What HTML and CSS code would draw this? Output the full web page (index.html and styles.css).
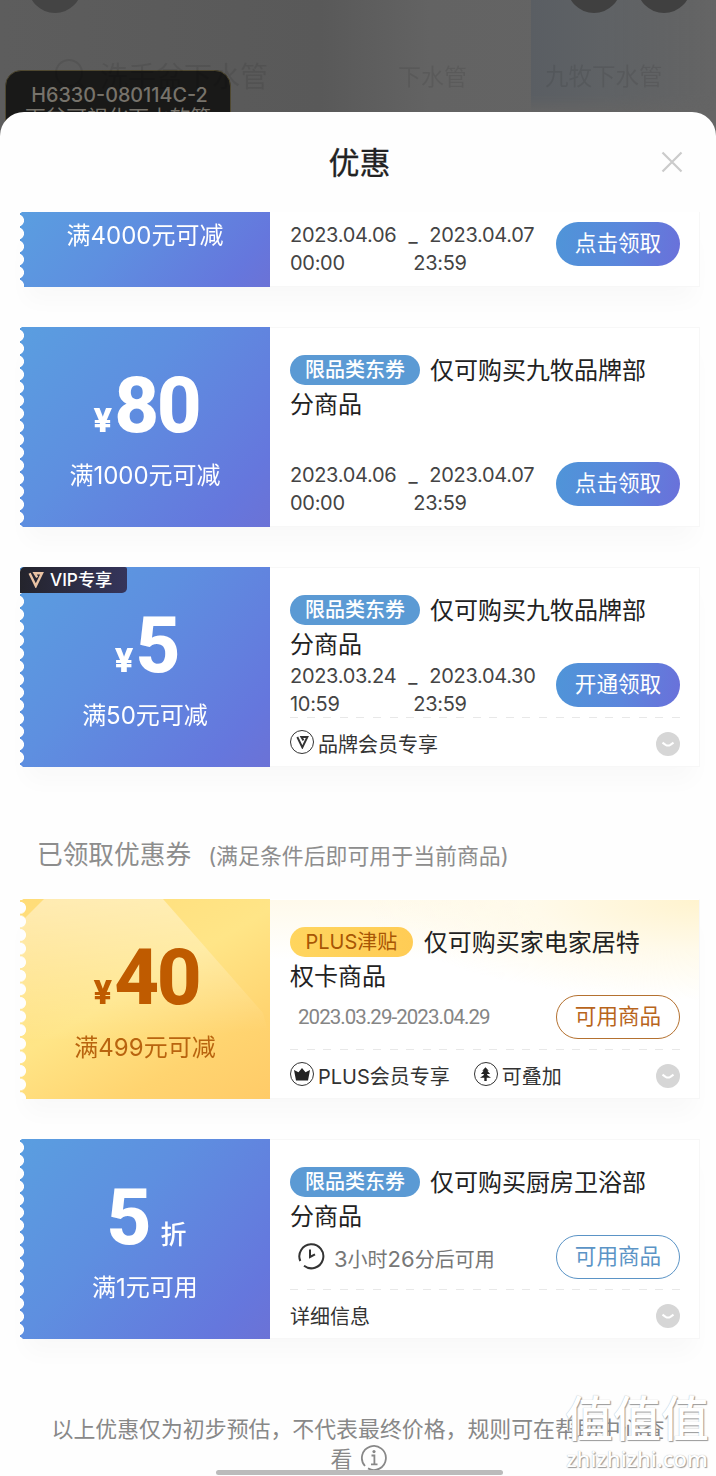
FILE: index.html
```html
<!DOCTYPE html>
<html lang="zh-CN">
<head>
<meta charset="utf-8">
<title>优惠</title>
<link rel="stylesheet" href="styles.css">
</head>
<body>
<svg class="defs" width="0" height="0">
  <symbol id="more" viewBox="0 0 24 24"><circle cx="12" cy="12" r="12" fill="#d6d6d6"/><path d="M6.5 10.6L9.6 12.9Q12 14.3 14.4 12.9L17.5 10.6" fill="none" stroke="#fff" stroke-width="2"/></symbol>
  <symbol id="vee" viewBox="0 0 16 16"><path d="M1.6 1.2L7.8 14 14 1.2H6.6L9.2 5.4" fill="none" stroke="currentColor" stroke-width="2.4"/></symbol>
</svg>
<div class="screen">
  <div class="backdrop">
    <i class="orb orb-a"></i><i class="orb orb-b"></i><i class="orb orb-c"></i>
    <i class="tile"></i>
    <div class="badge"><div class="model">H6330-080114C-2</div><div class="desc">下盆可视化下水软管</div></div>
    <svg class="lens" width="32" height="32" viewBox="0 0 32 32"><circle cx="14" cy="14" r="13" fill="none" stroke="#000" stroke-width="2"/><path d="M23 23L30 30" stroke="#000" stroke-width="2"/></svg>
    <span class="ghost ghost-a">洗手盆下水管</span>
    <span class="ghost ghost-b">下水管</span>
    <span class="ghost ghost-c">九牧下水管</span>
  </div>
  <main class="sheet">
    <header class="head">
      <h1>优惠</h1>
      <svg class="close" width="22" height="22" viewBox="0 0 22 22"><path d="M1.5 1.5L20.5 20.5M20.5 1.5L1.5 20.5" stroke="#cbcbcb" stroke-width="2.2"/></svg>
    </header>
    <section class="list">
      <article class="coupon cut">
        <div class="value"><p class="cond">满4000元可减</p></div>
        <div class="info">
          <div class="row">
            <div class="dates"><span>2023.04.06<br>00:00</span><b>_</b><span>2023.04.07<br><em>23:59</em></span></div>
            <button class="btn">点击领取</button>
          </div>
        </div>
      </article>
      <article class="coupon">
        <div class="value"><p class="amount"><small>¥</small><strong>80</strong></p><p class="cond">满1000元可减</p></div>
        <div class="info">
          <h2><span class="tag">限品类东券</span>仅可购买九牧品牌部<br>分商品</h2>
          <div class="row low">
            <div class="dates"><span>2023.04.06<br>00:00</span><b>_</b><span>2023.04.07<br><em>23:59</em></span></div>
            <button class="btn">点击领取</button>
          </div>
        </div>
      </article>
      <article class="coupon">
        <div class="vip"><svg width="16" height="16"><use href="#vee"/></svg>VIP专享</div>
        <div class="value"><p class="amount"><small>¥</small><strong>5</strong></p><p class="cond">满50元可减</p></div>
        <div class="info">
          <h2><span class="tag">限品类东券</span>仅可购买九牧品牌部<br>分商品</h2>
          <div class="row">
            <div class="dates"><span>2023.03.24<br>10:59</span><b>_</b><span>2023.04.30<br><em>23:59</em></span></div>
            <button class="btn">开通领取</button>
          </div>
          <div class="foot"><span class="ring"><svg width="13" height="13" viewBox="0 0 16 16"><use href="#vee"/></svg></span><span>品牌会员专享</span><svg class="more" width="24" height="24"><use href="#more"/></svg></div>
        </div>
      </article>
      <h3>已领取优惠券<small>(满足条件后即可用于当前商品)</small></h3>
      <article class="coupon plus">
        <div class="value">
          <svg class="shine" width="250" height="200" viewBox="0 0 250 200">
            <defs><linearGradient id="sh" x1="0.35" y1="0" x2="0.45" y2="1"><stop offset="0" stop-color="#fff" stop-opacity=".42"/><stop offset="1" stop-color="#fff" stop-opacity="0"/></linearGradient></defs>
            <path d="M0 24L24 0H143L243 114L250 140H0Z" fill="url(#sh)"/>
          </svg>
          <p class="amount"><small>¥</small><strong>40</strong></p><p class="cond">满499元可减</p>
        </div>
        <div class="info">
          <h2><span class="tag">PLUS津贴</span>仅可购买家电家居特<br>权卡商品</h2>
          <div class="row">
            <div class="period">2023.03.29-2023.04.29</div>
            <button class="btn line">可用商品</button>
          </div>
          <div class="foot">
            <span class="ring"><svg width="16" height="13" viewBox="0 0 16 13"><path d="M0 2L4.5 4.3 8 0 11.5 4.3 16 2 14 12.5H2Z" fill="#222"/></svg></span><span>PLUS会员专享</span>
            <span class="ring second"><svg width="11" height="14" viewBox="0 0 12 15"><path d="M6 0L9.5 4H8L11 7.6H7.8V8.6L12 11.6H7.3V15H4.7V11.6H0L4.2 8.6V7.6H1L4 4H2.5Z" fill="#222"/></svg></span><span>可叠加</span>
            <svg class="more" width="24" height="24"><use href="#more"/></svg>
          </div>
        </div>
      </article>
      <article class="coupon">
        <div class="value"><p class="amount rate"><strong>5</strong><small>折</small></p><p class="cond">满1元可用</p></div>
        <div class="info">
          <h2><span class="tag">限品类东券</span>仅可购买厨房卫浴部<br>分商品</h2>
          <div class="row">
            <div class="wait"><svg width="28" height="28" viewBox="0 0 28 28"><path d="M3.3 19A12 12 0 1 1 7 23.8M13 7.5V15L18 12.3" fill="none" stroke="#333" stroke-width="2"/></svg><span><big>3</big>小时<big>26</big>分后可用</span></div>
            <button class="btn line">可用商品</button>
          </div>
          <div class="foot"><span>详细信息</span><svg class="more" width="24" height="24"><use href="#more"/></svg></div>
        </div>
      </article>
    </section>
    <footer class="note">
      <p>以上优惠仅为初步预估，不代表最终价格，规则可在帮助中心查</p>
      <p class="last">看<svg width="28" height="28" viewBox="0 0 28 28"><path d="M5 22A12 12 0 1 1 8 24.4M11.5 11.5H14.4V20M11 20.3H17.5" fill="none" stroke="#888" stroke-width="1.8"/><circle cx="14" cy="7.6" r="1.6" fill="#888"/></svg></p>
    </footer>
  </main>
  <i class="homebar"></i>
  <div class="mark"><div class="mark-cn">值值值</div><div class="mark-en">zhizhizhi.com</div></div>
</div>
</body>
</html>
```
FILE: styles.css
```css
* { box-sizing: border-box; margin: 0; padding: 0; }
i, em, b { font-style: normal; font-weight: 400; }
body { font-family: Inter, "Noto Sans CJK SC", sans-serif; color: #222; }
.defs { position: absolute; }
.screen { position: relative; width: 716px; height: 1476px; overflow: hidden; background: linear-gradient(90deg, #5d5d5d 0, #595959 320px, #636363 430px, #656565); }

.backdrop > * { position: absolute; }
.orb { width: 54px; height: 54px; border-radius: 50%; background: #444; top: -41px; }
.orb-a { left: 28px; }
.orb-b { left: 567px; background: #404040; }
.orb-c { left: 637px; background: #404040; }
.orb { z-index: 1; }
.tile { left: 531px; top: 0; width: 185px; height: 112px; background: linear-gradient(90deg, #5a5e63, #5f6265 40%, rgba(101,101,101,0)); -webkit-mask: linear-gradient(#000 85%, transparent); mask: linear-gradient(#000 85%, transparent); }
.badge { left: 5px; top: 70px; width: 226px; height: 80px; border: 1px solid #4f4830; border-radius: 16px; background: #191918; text-align: center; color: #77736b; padding-top: 11px; }
.model { font-size: 19.8px; line-height: 26px; font-weight: 500; padding-left: 3px; }
.desc { font-size: 20.7px; line-height: 24px; margin-top: -2px; }
.lens { left: 55px; top: 59px; opacity: .08; }
.ghost { color: #000; opacity: .08; line-height: 34px; white-space: nowrap; top: 60px; }
.ghost-a { left: 100px; font-size: 28px; }
.ghost-b { left: 398px; font-size: 23px; }
.ghost-c { left: 545px; font-size: 23.5px; }

.sheet { position: absolute; top: 112px; left: 0; right: 0; bottom: 0; background: #fefefe; border-radius: 24px 24px 0 0; display: flex; flex-direction: column; }
.head { flex: none; height: 100px; display: grid; grid-template-columns: 1fr auto 1fr; align-items: center; padding: 0 33px 0 35px; }
.head h1 { grid-column: 2; font-size: 31px; font-weight: 400; line-height: 40px; padding: 2px 0 0 1px; color: #222; -webkit-text-stroke: .3px #222; }
.close { justify-self: end; }
.list { padding: 0 16px 0 20px; }

.coupon { position: relative; display: flex; width: 680px; height: 200px; margin-bottom: 40px; box-shadow: 0 20px 22px -6px rgba(0,0,0,.025); }
.coupon.cut { height: 75px; }
.value { position: relative; width: 250px; color: #fff; text-align: center; background: linear-gradient(130deg, #5a9ee0 0, #5e8fe0 40%, #6577dd 85%, #6b72d6);
  -webkit-mask: radial-gradient(circle at -2px 6.5px, transparent 5.6px, #000 6.4px) 0 2px / 250px 13px repeat-y; mask: radial-gradient(circle at -2px 6.5px, transparent 5.6px, #000 6.4px) 0 2px / 250px 13px repeat-y; }
.amount { height: 76px; margin-top: 41px; display: flex; justify-content: center; align-items: baseline; font-family: Roboto, sans-serif; line-height: 76px; }
.amount strong { font-size: 78px; font-weight: 800; letter-spacing: -2.5px; margin-right: -2.5px; }
.amount small { font-family: Inter, sans-serif; font-size: 33px; font-weight: 800; margin-right: 2px; }
.amount.rate { padding-left: 3px; }
.rate small { font-family: "Noto Sans CJK SC", sans-serif; font-size: 26px; font-weight: 500; margin: 0 0 0 14px; }
.cond { font-size: 24px; line-height: 32px; margin-top: 16px; }
.cut .cond { margin-top: 8px; }
.info { flex: 1; background: #fff; border: 1px solid #f7f7f7; border-left: 0; padding: 26px 19px 0 20px; }
.cut .info { padding-top: 8px; border-top: 0; }
h2 { height: 67px; font-size: 24px; font-weight: 400; line-height: 34px; white-space: nowrap; }
.tag { position: relative; top: -2px; display: inline-block; height: 30px; line-height: 30px; border-radius: 15px; padding: 0 15px; margin-right: 10px; font-size: 20px; font-weight: 500; color: #fff; background: #5b9ad4; }
.row { height: 48px; display: flex; justify-content: space-between; align-items: center; }
.row.low { margin-top: 39px; }
.dates { display: flex; padding-top: 9px; font-size: 20px; letter-spacing: -.3px; line-height: 28px; color: #444; }
.dates b { width: 33px; text-align: center; }
.dates em { margin-left: -16px; }
.btn { width: 124px; height: 44px; border: 0; border-radius: 22px; color: #fff; font: 400 21.6px/40px "Noto Sans CJK SC", sans-serif; padding-bottom: 4px; background: linear-gradient(100deg, #4f95d8, #5b86dc 55%, #6a70da); }
.btn.line { background: #fff; border: 1px solid #5b94c6; color: #5b94c6; line-height: 38px; }
.foot { height: 50px; margin-top: 8px; padding-top: 3px; display: flex; align-items: center; font-size: 20px; line-height: 28px; color: #333;
  background: repeating-linear-gradient(90deg, #e8e8e8 0 8px, transparent 8px 16.6px) 0 0 / 100% 1px no-repeat; }
.foot > span:not(.ring) { padding-top: 2px; }
.ring { width: 24px; height: 24px; border: 1.5px solid #333; border-radius: 50%; margin: -3px 4px 0 0; display: flex; align-items: center; justify-content: center; }
.second { margin-left: 24px; }
.more { margin-left: auto; }
.vip { position: absolute; z-index: 1; left: 0; top: 0; width: 107px; height: 26px; border-radius: 5px 2px 5px 0; background: linear-gradient(90deg, #24242c, #35355c); color: #fff; font-size: 17.2px; font-weight: 500; line-height: 26px; display: flex; align-items: center; gap: 6px; padding-left: 8px; }
.vip svg { color: #eac3a4; }

h3 { height: 92px; line-height: 36px; padding: 31px 0 0 17px; margin: -1px 0 1px; font-size: 25.7px; font-weight: 400; color: #8d8d8d; }
h3 small { font-size: 21.9px; margin-left: 17px; }

.plus .value { color: #bf5b00; background: linear-gradient(150deg, #ffdc78 0, #ffe587 45%, #ffd470 75%, #ffcb68);
  -webkit-mask: radial-gradient(circle at 0 6.8px, transparent 5.6px, #000 6.4px) 0 2px / 250px 13.6px repeat-y; mask: radial-gradient(circle at 0 6.8px, transparent 5.6px, #000 6.4px) 0 2px / 250px 13.6px repeat-y; }
.plus .amount, .plus .cond { position: relative; }
.plus .cond { color: #b9640f; }
.shine { position: absolute; left: 0; top: 0; }
.plus .info { border-color: transparent #f7f7f7 #f7f7f7; background: radial-gradient(ellipse 330px 100px at 100% 0, #fff3ce, #fffaea 50%, rgba(255,255,255,0)), linear-gradient(#fffaeb, #fff 60px); }
.plus .tag { padding: 0 15.5px; margin-right: 11px; background: linear-gradient(90deg, #ffd55e, #ffcc55); color: #a85604; font-weight: 400; }
.plus .btn { border-color: #b47130; color: #b8651c; }
.period { font: 400 20.5px/28px Roboto, sans-serif; color: #858585; padding-left: 8px; letter-spacing: -.95px; }
.wait { display: flex; align-items: center; gap: 9px; padding-left: 7px; font-size: 20px; line-height: 28px; color: #777; }
.wait svg { margin-top: -3px; }
.wait span { padding-top: 5px; }
.wait big { font-size: 22px; }

.note { margin-top: 35px; text-align: center; color: #888; font-size: 21.9px; line-height: 30px; white-space: nowrap; }
.note .last { display: flex; justify-content: center; align-items: center; gap: 8px; padding-left: 3px; }
.note .last svg { margin-top: -2px; }
.homebar { position: absolute; left: 216px; top: 1470px; width: 287px; height: 5px; border-radius: 3px; background: #bbb; }
.mark { position: absolute; left: 564px; top: 1391px; width: 146px; text-align: center; color: #fff; text-shadow: 1px 1px 1px #999, 0 0 1px #aaa; }
.mark-cn { font-size: 48px; line-height: 56px; font-weight: 500; }
.mark-en { font: 500 22px/22px "Noto Sans", sans-serif; letter-spacing: 0; }
```
